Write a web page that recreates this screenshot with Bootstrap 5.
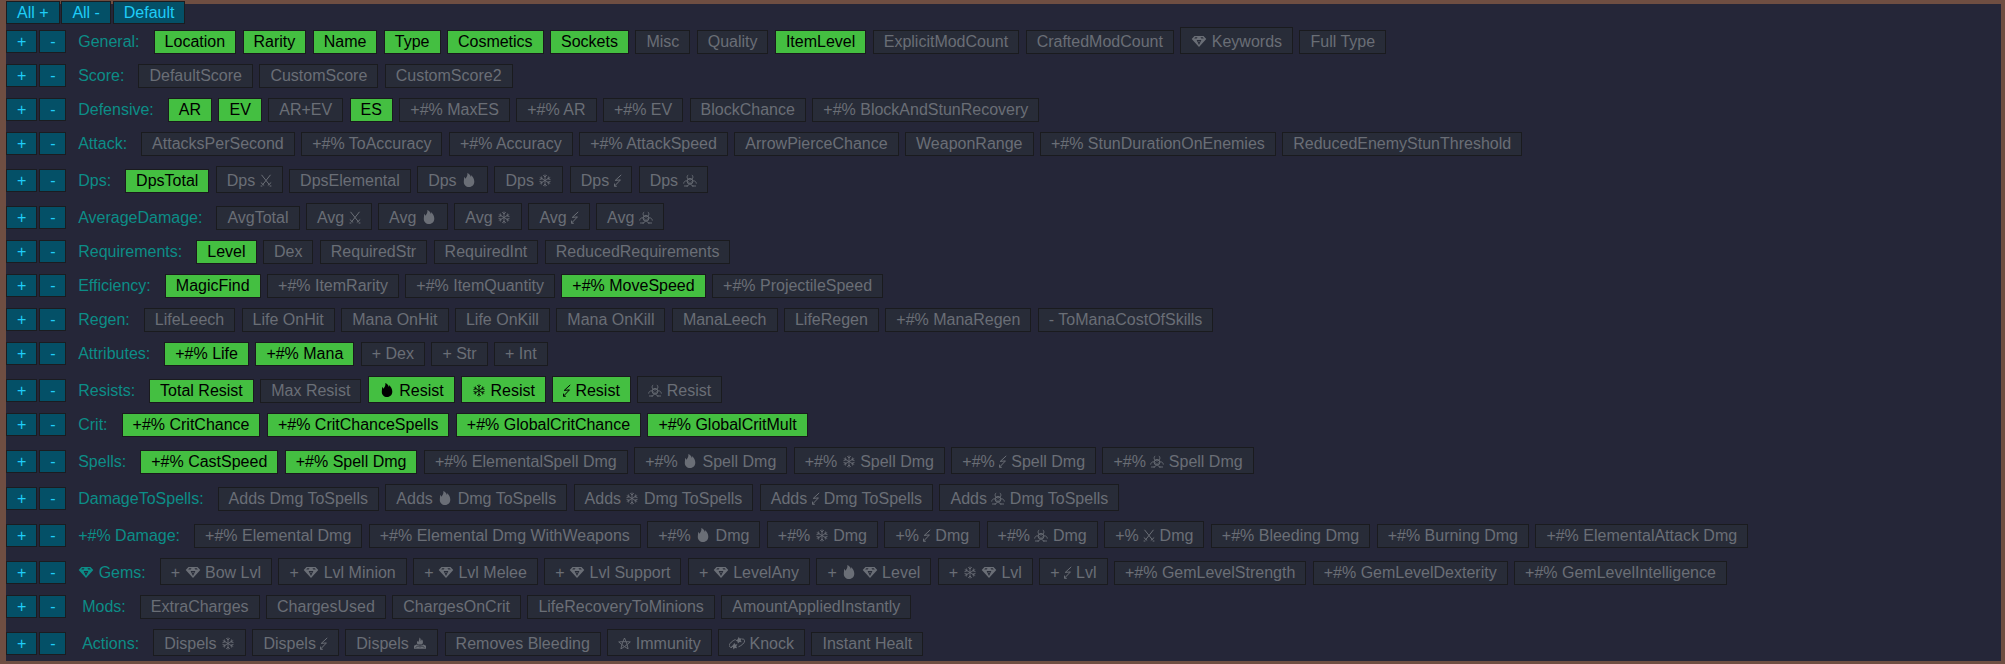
<!DOCTYPE html>
<html lang="en">
<head>
<meta charset="utf-8">
<title>Column filters</title>
<link rel="stylesheet" href="https://cdn.jsdelivr.net/npm/bootstrap@5.3.0/dist/css/bootstrap.min.css">
<script src="https://cdn.jsdelivr.net/npm/bootstrap@5.3.0/dist/js/bootstrap.bundle.min.js"></script>
<style>
  body { font-family: "Liberation Sans", Arial, sans-serif; font-size: 16px; line-height: 18px; background: #6f4e42; height: 664px; overflow: hidden; }
  .panel { background: #252638; margin: 0; border: solid #6f4e42; border-width: 4px 4px 3px 6px; height: 664px; white-space: nowrap; }
  .toolbar { margin-top: -3px; height: 23px; gap: 1.8px; }
  .toolbar, .groups { position: relative; }
  .groups { padding-top: 3px; gap: 10px; }
  .line { gap: 6.43px; }
  .btn { --bs-btn-font-size: 16px; --bs-btn-line-height: 18px; --bs-btn-border-radius: 0; --bs-btn-padding-x: 10px; --bs-btn-padding-y: 2px; transition: none; }
  .set { --bs-btn-color: #1fcdf8; --bs-btn-bg: #045067; --bs-btn-border-color: #1b1c20; height: 23px; padding-bottom: 1px; }
  .chip { --bs-btn-color: #6a6e76; --bs-btn-bg: #282c38; --bs-btn-border-color: #1a1b1e; }
  .chip.on { --bs-btn-color: #000; --bs-btn-bg: #44bf41; }
  .chip.tall { padding-top: 5px; }
  .pair { gap: 1.8px; margin-right: 5.3px; }
  .name { color: #0c8d87; margin-right: 7.6px; }
  .name.in { margin-left: 4px; }
  svg.i { height: 14px; vertical-align: -1px; fill: currentColor; stroke: currentColor; stroke-width: 0; overflow: visible; }
  .w16 { width: 16px; } .w14 { width: 14px; } .w13 { width: 13px; } .w12 { width: 12px; } .w7 { width: 7.5px; }
</style>
</head>
<body>
<svg class="d-none" xmlns="http://www.w3.org/2000/svg">
  <symbol id="gem" viewBox="0 0 16 14"><path fill-rule="evenodd" d="M3.500 2h9L15.300 5 8 13 .7 5zM4.200 3.200 3.200 4.500h2.500l.8-1.300zM9.500 3.200l.8 1.300h2.500l-1-1.300zM5.600 6.100 8 11l2.400-4.900zM7.300 7h1.400L8 8.600z"/></symbol>
  <symbol id="fire" viewBox="0 0 16 14"><path d="M6.300 0c2.200 1 3.200 2.300 3.600 3.900.4-.6.400-1.200.2-1.900 1.900 1.700 3.200 4 3.200 6.500 0 3.200-2.100 5.500-5.200 5.500S2.800 11.900 2.800 9c0-1.900.5-3 .2-5 .8.4 1.200 1 1.400 1.700C6 4 6.700 2 6.300 0z"/></symbol>
  <symbol id="snow" viewBox="0 0 14 14"><g fill="none" stroke-width=".85"><path d="M7 1.500v12M1.800 4.500l10.400 6M12.200 4.500l-10.400 6M5.200 2.200 7 4l1.800-1.800M5.200 12.800 7 11l1.800 1.800M1.500 6.600l2.600-.7-.7-2.400M12.500 6.600l-2.600-.7.700-2.400M1.500 8.400l2.600.7-.7 2.400M12.500 8.400l-2.600.7.700 2.400"/></g></symbol>
  <symbol id="bolt" viewBox="0 0 7 14"><path fill="none" stroke-width="1" d="M7.200 1.700 1 7.400l5.200-.5L.2 13.200M.2 10.600v2.700h2.300"/></symbol>
  <symbol id="bio" viewBox="0 0 14 14"><g fill="none" stroke-width=".9"><path d="M5.200 1.900C3.300 3.300 3.900 6.900 7 6.900s3.700-3.600 1.800-5M.7 10.600C.6 8 4 6.700 5.700 9c1.300 2 0 4-2.200 4M13.300 10.600C13.400 8 10 6.700 8.300 9c-1.300 2 0 4 2.200 4M1 13h4M9 13h4"/><circle cx="7" cy="8.300" r="2.900"/></g></symbol>
  <symbol id="swords" viewBox="0 0 12 14"><path fill="none" stroke-width="1" d="M1.500 1.800 9.600 12M10.500 1.800 2.400 12M.8 9.500l3.400 3M11.200 9.500l-3.400 3M.6 13h1.800M9.600 13h1.800"/></symbol>
  <symbol id="burn" viewBox="0 0 14 14"><path d="M6.300 1.500c1.700.9 1.500 2 1.200 3.200.8-.2 1.200-.8 1.300-1.500 1.500 1.500 1.800 4-.1 5.400H4.800C3.400 7 3.800 5.800 5 4.800c.2.700.5 1 .9 1.100C5.500 4.400 6.800 3.200 6.300 1.500z"/><path d="M1 9.700 3.500 8.500 7 9.700l3.500-1.200L13 9.700v3.100H1z"/><path fill="none" stroke="#282c38" stroke-width=".7" d="M2.500 11.500 5 9.900l2 1.200 2-1.200 2.500 1.600"/></symbol>
  <symbol id="star" viewBox="0 0 13 14"><path fill="none" stroke-width=".9" d="m6.500 2 1.600 3.700 4.200.2-3.200 2.700 1 4.300-3.600-2.300-3.600 2.300 1-4.300L.7 5.900l4.200-.2zM4.900 5.700h3.200l1 2.900-2.600 2-2.600-2z"/></symbol>
  <symbol id="knock" viewBox="0 0 16 14"><path fill="none" stroke-width="1" d="M6.500 3.500C3.500 4.600.3 7.500.2 9.600c0 1.300 1.200 1.900 2.800 1.900M9.500 10.800c3.200-1.200 6.100-3.900 6.200-6 0-1.400-1.300-1.900-2.900-1.700"/><path d="m9.800.800.8 1.800 2.100-.4-1 2 1 2.100-2.200-.2-1.600 1.500-.4-2.200-2-.9 2-1zM5.300 6.800l.8 1.700 2.300-.2-1.200 2 .9 1.900-2.200-.2-1.500 1.400-.4-2.100-2-.900 2-1.200z"/></symbol>
</svg>
<main class="panel">
  <div class="toolbar d-flex">
    <button class="btn set">All +</button><button class="btn set">All -</button><button class="btn set">Default</button>
  </div>
  <div class="groups d-flex flex-column">
    <div class="line d-flex align-items-baseline">
      <div class="pair d-flex"><button class="btn set">+</button><button class="btn set">-</button></div>
      <span class="name">General:</span>
      <button class="btn chip on">Location</button>
      <button class="btn chip on">Rarity</button>
      <button class="btn chip on">Name</button>
      <button class="btn chip on">Type</button>
      <button class="btn chip on">Cosmetics</button>
      <button class="btn chip on">Sockets</button>
      <button class="btn chip">Misc</button>
      <button class="btn chip">Quality</button>
      <button class="btn chip on">ItemLevel</button>
      <button class="btn chip">ExplicitModCount</button>
      <button class="btn chip">CraftedModCount</button>
      <button class="btn chip tall"><svg class="i w16"><use href="#gem"/></svg> Keywords</button>
      <button class="btn chip">Full Type</button>
    </div>
    <div class="line d-flex align-items-baseline">
      <div class="pair d-flex"><button class="btn set">+</button><button class="btn set">-</button></div>
      <span class="name">Score:</span>
      <button class="btn chip">DefaultScore</button>
      <button class="btn chip">CustomScore</button>
      <button class="btn chip">CustomScore2</button>
    </div>
    <div class="line d-flex align-items-baseline">
      <div class="pair d-flex"><button class="btn set">+</button><button class="btn set">-</button></div>
      <span class="name">Defensive:</span>
      <button class="btn chip on">AR</button>
      <button class="btn chip on">EV</button>
      <button class="btn chip">AR+EV</button>
      <button class="btn chip on">ES</button>
      <button class="btn chip">+#% MaxES</button>
      <button class="btn chip">+#% AR</button>
      <button class="btn chip">+#% EV</button>
      <button class="btn chip">BlockChance</button>
      <button class="btn chip">+#% BlockAndStunRecovery</button>
    </div>
    <div class="line d-flex align-items-baseline">
      <div class="pair d-flex"><button class="btn set">+</button><button class="btn set">-</button></div>
      <span class="name">Attack:</span>
      <button class="btn chip">AttacksPerSecond</button>
      <button class="btn chip">+#% ToAccuracy</button>
      <button class="btn chip">+#% Accuracy</button>
      <button class="btn chip">+#% AttackSpeed</button>
      <button class="btn chip">ArrowPierceChance</button>
      <button class="btn chip">WeaponRange</button>
      <button class="btn chip">+#% StunDurationOnEnemies</button>
      <button class="btn chip">ReducedEnemyStunThreshold</button>
    </div>
    <div class="line d-flex align-items-baseline">
      <div class="pair d-flex"><button class="btn set">+</button><button class="btn set">-</button></div>
      <span class="name">Dps:</span>
      <button class="btn chip on">DpsTotal</button>
      <button class="btn chip tall">Dps <svg class="i w12"><use href="#swords"/></svg></button>
      <button class="btn chip">DpsElemental</button>
      <button class="btn chip tall">Dps <svg class="i w16"><use href="#fire"/></svg></button>
      <button class="btn chip tall">Dps <svg class="i w14"><use href="#snow"/></svg></button>
      <button class="btn chip tall">Dps <svg class="i w7"><use href="#bolt"/></svg></button>
      <button class="btn chip tall">Dps <svg class="i w14"><use href="#bio"/></svg></button>
    </div>
    <div class="line d-flex align-items-baseline">
      <div class="pair d-flex"><button class="btn set">+</button><button class="btn set">-</button></div>
      <span class="name">AverageDamage:</span>
      <button class="btn chip">AvgTotal</button>
      <button class="btn chip tall">Avg <svg class="i w12"><use href="#swords"/></svg></button>
      <button class="btn chip tall">Avg <svg class="i w16"><use href="#fire"/></svg></button>
      <button class="btn chip tall">Avg <svg class="i w14"><use href="#snow"/></svg></button>
      <button class="btn chip tall">Avg <svg class="i w7"><use href="#bolt"/></svg></button>
      <button class="btn chip tall">Avg <svg class="i w14"><use href="#bio"/></svg></button>
    </div>
    <div class="line d-flex align-items-baseline">
      <div class="pair d-flex"><button class="btn set">+</button><button class="btn set">-</button></div>
      <span class="name">Requirements:</span>
      <button class="btn chip on">Level</button>
      <button class="btn chip">Dex</button>
      <button class="btn chip">RequiredStr</button>
      <button class="btn chip">RequiredInt</button>
      <button class="btn chip">ReducedRequirements</button>
    </div>
    <div class="line d-flex align-items-baseline">
      <div class="pair d-flex"><button class="btn set">+</button><button class="btn set">-</button></div>
      <span class="name">Efficiency:</span>
      <button class="btn chip on">MagicFind</button>
      <button class="btn chip">+#% ItemRarity</button>
      <button class="btn chip">+#% ItemQuantity</button>
      <button class="btn chip on">+#% MoveSpeed</button>
      <button class="btn chip">+#% ProjectileSpeed</button>
    </div>
    <div class="line d-flex align-items-baseline">
      <div class="pair d-flex"><button class="btn set">+</button><button class="btn set">-</button></div>
      <span class="name">Regen:</span>
      <button class="btn chip">LifeLeech</button>
      <button class="btn chip">Life OnHit</button>
      <button class="btn chip">Mana OnHit</button>
      <button class="btn chip">Life OnKill</button>
      <button class="btn chip">Mana OnKill</button>
      <button class="btn chip">ManaLeech</button>
      <button class="btn chip">LifeRegen</button>
      <button class="btn chip">+#% ManaRegen</button>
      <button class="btn chip">- ToManaCostOfSkills</button>
    </div>
    <div class="line d-flex align-items-baseline">
      <div class="pair d-flex"><button class="btn set">+</button><button class="btn set">-</button></div>
      <span class="name">Attributes:</span>
      <button class="btn chip on">+#% Life</button>
      <button class="btn chip on">+#% Mana</button>
      <button class="btn chip">+ Dex</button>
      <button class="btn chip">+ Str</button>
      <button class="btn chip">+ Int</button>
    </div>
    <div class="line d-flex align-items-baseline">
      <div class="pair d-flex"><button class="btn set">+</button><button class="btn set">-</button></div>
      <span class="name">Resists:</span>
      <button class="btn chip on">Total Resist</button>
      <button class="btn chip">Max Resist</button>
      <button class="btn chip on tall"><svg class="i w16"><use href="#fire"/></svg> Resist</button>
      <button class="btn chip on tall"><svg class="i w14"><use href="#snow"/></svg> Resist</button>
      <button class="btn chip on tall"><svg class="i w7"><use href="#bolt"/></svg> Resist</button>
      <button class="btn chip tall"><svg class="i w14"><use href="#bio"/></svg> Resist</button>
    </div>
    <div class="line d-flex align-items-baseline">
      <div class="pair d-flex"><button class="btn set">+</button><button class="btn set">-</button></div>
      <span class="name">Crit:</span>
      <button class="btn chip on">+#% CritChance</button>
      <button class="btn chip on">+#% CritChanceSpells</button>
      <button class="btn chip on">+#% GlobalCritChance</button>
      <button class="btn chip on">+#% GlobalCritMult</button>
    </div>
    <div class="line d-flex align-items-baseline">
      <div class="pair d-flex"><button class="btn set">+</button><button class="btn set">-</button></div>
      <span class="name">Spells:</span>
      <button class="btn chip on">+#% CastSpeed</button>
      <button class="btn chip on">+#% Spell Dmg</button>
      <button class="btn chip">+#% ElementalSpell Dmg</button>
      <button class="btn chip tall">+#% <svg class="i w16"><use href="#fire"/></svg> Spell Dmg</button>
      <button class="btn chip tall">+#% <svg class="i w14"><use href="#snow"/></svg> Spell Dmg</button>
      <button class="btn chip tall">+#% <svg class="i w7"><use href="#bolt"/></svg> Spell Dmg</button>
      <button class="btn chip tall">+#% <svg class="i w14"><use href="#bio"/></svg> Spell Dmg</button>
    </div>
    <div class="line d-flex align-items-baseline">
      <div class="pair d-flex"><button class="btn set">+</button><button class="btn set">-</button></div>
      <span class="name">DamageToSpells:</span>
      <button class="btn chip">Adds Dmg ToSpells</button>
      <button class="btn chip tall">Adds <svg class="i w16"><use href="#fire"/></svg> Dmg ToSpells</button>
      <button class="btn chip tall">Adds <svg class="i w14"><use href="#snow"/></svg> Dmg ToSpells</button>
      <button class="btn chip tall">Adds <svg class="i w7"><use href="#bolt"/></svg> Dmg ToSpells</button>
      <button class="btn chip tall">Adds <svg class="i w14"><use href="#bio"/></svg> Dmg ToSpells</button>
    </div>
    <div class="line d-flex align-items-baseline">
      <div class="pair d-flex"><button class="btn set">+</button><button class="btn set">-</button></div>
      <span class="name">+#% Damage:</span>
      <button class="btn chip">+#% Elemental Dmg</button>
      <button class="btn chip">+#% Elemental Dmg WithWeapons</button>
      <button class="btn chip tall">+#% <svg class="i w16"><use href="#fire"/></svg> Dmg</button>
      <button class="btn chip tall">+#% <svg class="i w14"><use href="#snow"/></svg> Dmg</button>
      <button class="btn chip tall">+% <svg class="i w7"><use href="#bolt"/></svg> Dmg</button>
      <button class="btn chip tall">+#% <svg class="i w14"><use href="#bio"/></svg> Dmg</button>
      <button class="btn chip tall">+% <svg class="i w12"><use href="#swords"/></svg> Dmg</button>
      <button class="btn chip">+#% Bleeding Dmg</button>
      <button class="btn chip">+#% Burning Dmg</button>
      <button class="btn chip">+#% ElementalAttack Dmg</button>
    </div>
    <div class="line d-flex align-items-baseline">
      <div class="pair d-flex"><button class="btn set">+</button><button class="btn set">-</button></div>
      <span class="name"><svg class="i w16"><use href="#gem"/></svg> Gems:</span>
      <button class="btn chip tall">+ <svg class="i w16"><use href="#gem"/></svg> Bow Lvl</button>
      <button class="btn chip tall">+ <svg class="i w16"><use href="#gem"/></svg> Lvl Minion</button>
      <button class="btn chip tall">+ <svg class="i w16"><use href="#gem"/></svg> Lvl Melee</button>
      <button class="btn chip tall">+ <svg class="i w16"><use href="#gem"/></svg> Lvl Support</button>
      <button class="btn chip tall">+ <svg class="i w16"><use href="#gem"/></svg> LevelAny</button>
      <button class="btn chip tall">+ <svg class="i w16"><use href="#fire"/></svg> <svg class="i w16"><use href="#gem"/></svg> Level</button>
      <button class="btn chip tall">+ <svg class="i w14"><use href="#snow"/></svg> <svg class="i w16"><use href="#gem"/></svg> Lvl</button>
      <button class="btn chip tall">+ <svg class="i w7"><use href="#bolt"/></svg> Lvl</button>
      <button class="btn chip">+#% GemLevelStrength</button>
      <button class="btn chip">+#% GemLevelDexterity</button>
      <button class="btn chip">+#% GemLevelIntelligence</button>
    </div>
    <div class="line d-flex align-items-baseline">
      <div class="pair d-flex"><button class="btn set">+</button><button class="btn set">-</button></div>
      <span class="name in">Mods:</span>
      <button class="btn chip">ExtraCharges</button>
      <button class="btn chip">ChargesUsed</button>
      <button class="btn chip">ChargesOnCrit</button>
      <button class="btn chip">LifeRecoveryToMinions</button>
      <button class="btn chip">AmountAppliedInstantly</button>
    </div>
    <div class="line d-flex align-items-baseline">
      <div class="pair d-flex"><button class="btn set">+</button><button class="btn set">-</button></div>
      <span class="name in">Actions:</span>
      <button class="btn chip tall">Dispels <svg class="i w14"><use href="#snow"/></svg></button>
      <button class="btn chip tall">Dispels <svg class="i w7"><use href="#bolt"/></svg></button>
      <button class="btn chip tall">Dispels <svg class="i w14"><use href="#burn"/></svg></button>
      <button class="btn chip">Removes Bleeding</button>
      <button class="btn chip tall"><svg class="i w13"><use href="#star"/></svg> Immunity</button>
      <button class="btn chip tall"><svg class="i w16"><use href="#knock"/></svg> Knock</button>
      <button class="btn chip">Instant Healt</button>
    </div>
  </div>
</main>
</body>
</html>
